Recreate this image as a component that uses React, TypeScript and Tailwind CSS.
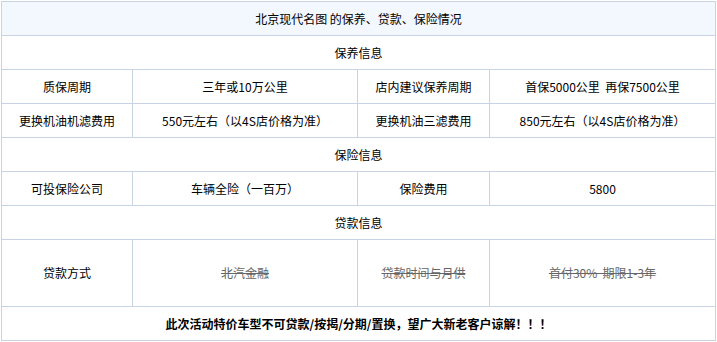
const font = { fontFamily: '"Noto Sans CJK SC", "Noto Sans", sans-serif' };

function Row({ cells, tall, muted }: { cells: string[]; tall?: boolean; muted?: boolean }) {
  const widths = ['w-[131px]', 'w-[225px]', 'w-[132px]', 'w-[225px]'];
  return (
    <div className={`flex border-t border-[#c8d4e6] ${tall ? 'h-[67px]' : 'h-[34px]'}`}>
      {cells.map((c, i) => (
        <div
          key={i}
          className={`${widths[i]} shrink-0 flex items-center justify-center ${i < 3 ? 'border-r border-[#c8d4e6]' : ''}`}
        >
          <span className={`whitespace-pre ${muted && i > 0 ? 'line-through text-[#666]' : ''}`}>{c}</span>
        </div>
      ))}
    </div>
  );
}

function Section({ title }: { title: string }) {
  return (
    <div className="h-[34px] border-t border-[#c8d4e6] flex items-center justify-center">{title}</div>
  );
}

export default function App() {
  return (
    <div className="bg-white w-[717px] h-[342px] pt-px pl-px text-[12px] text-black leading-none" style={font}>
      <div className="w-[715px] border border-[#c8d4e6]">
        <div className="h-[33px] bg-[#f3f7fe] flex items-center justify-center whitespace-pre">
          北京现代名图 的保养、贷款、保险情况
        </div>

        {/* 保养 */}
        <Section title="保养信息" />
        <Row cells={['质保周期', '三年或10万公里', '店内建议保养周期', '首保5000公里  再保7500公里']} />
        <Row cells={['更换机油机滤费用', '550元左右（以4S店价格为准）', '更换机油三滤费用', '850元左右（以4S店价格为准）']} />

        {/* 保险 */}
        <Section title="保险信息" />
        <Row cells={['可投保险公司', '车辆全险（一百万）', '保险费用', '5800']} />

        {/* 贷款 */}
        <Section title="贷款信息" />
        <Row tall muted cells={['贷款方式', '北汽金融', '贷款时间与月供', '首付30%  期限1-3年']} />

        <div className="h-[34px] border-t border-[#c8d4e6] flex items-center justify-center font-bold">
          此次活动特价车型不可贷款/按揭/分期/置换，望广大新老客户谅解！！！
        </div>
      </div>
    </div>
  );
}
